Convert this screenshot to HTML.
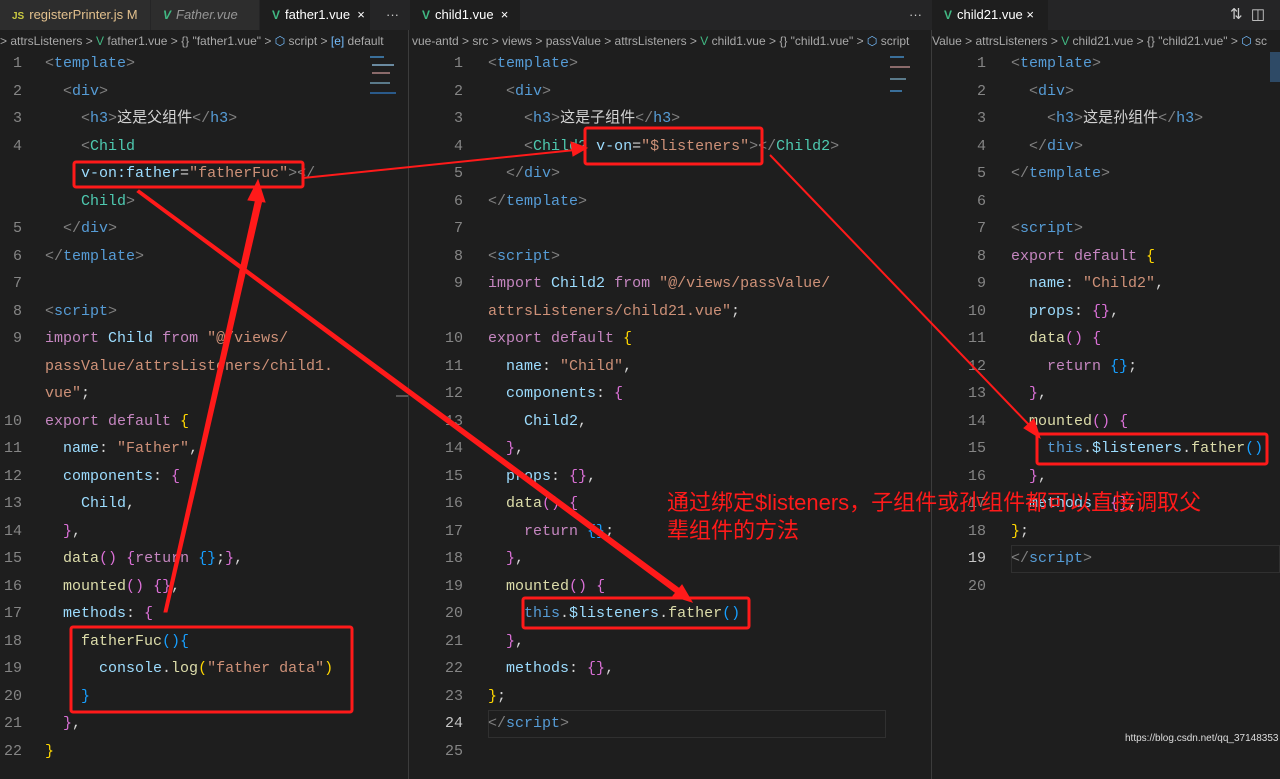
<!DOCTYPE html>
<html><head><meta charset="utf-8">
<style>
*{margin:0;padding:0;box-sizing:border-box}
body{width:1280px;height:749px;background:#1e1e1e;overflow:hidden;position:relative;font-family:"Liberation Mono","Noto Sans CJK SC",monospace;}
.bar{position:absolute;top:0;height:30px;background:#252526}
.tab{position:absolute;top:0;height:30px;line-height:30px;font-family:"Liberation Sans",sans-serif;font-size:13px;color:#cccccc;padding-left:12px;white-space:nowrap}
.tab.in{background:#2d2d2d;color:#969696}
.tab.act{background:#1e1e1e;color:#ffffff}
.vi{color:#41b883;font-weight:bold;font-size:12px;margin-right:5px}
.bc{position:absolute;top:31px;height:20px;line-height:20px;font-family:"Liberation Sans",sans-serif;font-size:12px;color:#a9a9a9;white-space:nowrap;overflow:hidden}
.sep{position:absolute;top:0;width:1px;height:749px;background:#3c3c3c}
.l{position:absolute;height:27.5px;line-height:27.5px;font-size:15px;white-space:pre;color:#d4d4d4}
.n{position:absolute;height:27.5px;line-height:27.5px;font-size:15px;color:#858585;text-align:right;width:30px}
.g{color:#808080}.t{color:#569cd6}.c{color:#4ec9b0}.a{color:#9cdcfe}.s{color:#ce9178}.k{color:#c586c0}.f{color:#dcdcaa}.y{color:#ffd700}.p{color:#da70d6}.b{color:#179fff}.w{color:#d4d4d4}
.mm{position:absolute;height:2px}
</style></head><body>
<div class="bar" style="left:0;width:1280px"></div>
<div class="tab in" style="left:0;width:150px;color:#e2c08d"><span style="color:#cbcb41;font-size:10px;font-weight:bold;margin-right:5px">JS</span>registerPrinter.js M</div>
<div class="tab in" style="left:151px;width:108px;font-style:italic"><span class="vi">V</span>Father.vue</div>
<div class="tab act" style="left:260px;width:110px"><span class="vi">V</span>father1.vue &nbsp;×</div>
<div class="tab" style="left:374px;color:#ccc">···</div>
<div class="tab act" style="left:410px;width:110px"><span class="vi">V</span>child1.vue &nbsp;×</div>
<div class="tab" style="left:897px;color:#ccc">···</div>
<div class="tab act" style="left:932px;width:116px"><span class="vi">V</span>child21.vue ×</div>
<div class="tab" style="left:1218px;color:#ccc;font-size:15px">⇅ &nbsp;◫</div>
<div class="bc" style="left:0;width:407px">&gt; attrsListeners &gt; <span style="color:#41b883">V</span> father1.vue &gt; {} "father1.vue" &gt; <span style="color:#75beff">⬡</span> script &gt; <span style="color:#75beff">[e]</span> default</div>
<div class="bc" style="left:412px;width:518px">vue-antd &gt; src &gt; views &gt; passValue &gt; attrsListeners &gt; <span style="color:#41b883">V</span> child1.vue &gt; {} "child1.vue" &gt; <span style="color:#75beff">⬡</span> script</div>
<div class="bc" style="left:932px;width:348px">Value &gt; attrsListeners &gt; <span style="color:#41b883">V</span> child21.vue &gt; {} "child21.vue" &gt; <span style="color:#75beff">⬡</span> sc</div>
<div class="sep" style="left:408px;top:30px"></div>
<div class="sep" style="left:931px;top:30px"></div>
<div style="position:absolute;left:396px;top:395px;width:12px;height:2px;background:#555"></div>
<div style="position:absolute;left:488px;top:710px;width:398px;height:28px;border:1px solid #303030"></div>
<div style="position:absolute;left:1011px;top:545px;width:269px;height:28px;border:1px solid #303030"></div>
<div class="mm" style="left:370px;top:56px;width:14px;background:#3a6f9a"></div><div class="mm" style="left:372px;top:64px;width:22px;background:#6a8aa0"></div><div class="mm" style="left:372px;top:72px;width:18px;background:#8a6a6a"></div><div class="mm" style="left:370px;top:82px;width:20px;background:#5a7a8a"></div><div class="mm" style="left:370px;top:92px;width:26px;background:#2a5a8a"></div>
<div class="mm" style="left:890px;top:56px;width:14px;background:#3a6f9a"></div><div class="mm" style="left:890px;top:66px;width:20px;background:#8a6a6a"></div><div class="mm" style="left:890px;top:78px;width:16px;background:#5a7a8a"></div><div class="mm" style="left:890px;top:90px;width:12px;background:#3a6f9a"></div>
<div class="mm" style="left:1270px;top:52px;width:10px;height:30px;background:#2e4a66"></div>

<div class="n" style="left:-8px;top:50px">1</div><div class="l" style="left:45px;top:50px"><span class="g">&lt;</span><span class="t">template</span><span class="g">&gt;</span></div>
<div class="n" style="left:-8px;top:77.5px">2</div><div class="l" style="left:45px;top:77.5px">  <span class="g">&lt;</span><span class="t">div</span><span class="g">&gt;</span></div>
<div class="n" style="left:-8px;top:105px">3</div><div class="l" style="left:45px;top:105px">    <span class="g">&lt;</span><span class="t">h3</span><span class="g">&gt;</span>这是父组件<span class="g">&lt;/</span><span class="t">h3</span><span class="g">&gt;</span></div>
<div class="n" style="left:-8px;top:132.5px">4</div><div class="l" style="left:45px;top:132.5px">    <span class="g">&lt;</span><span class="c">Child</span></div>
<div class="l" style="left:45px;top:160px">    <span class="a">v-on:father</span>=<span class="s">"fatherFuc"</span><span class="g">&gt;&lt;/</span></div>
<div class="l" style="left:45px;top:187.5px">    <span class="c">Child</span><span class="g">&gt;</span></div>
<div class="n" style="left:-8px;top:215px">5</div><div class="l" style="left:45px;top:215px">  <span class="g">&lt;/</span><span class="t">div</span><span class="g">&gt;</span></div>
<div class="n" style="left:-8px;top:242.5px">6</div><div class="l" style="left:45px;top:242.5px"><span class="g">&lt;/</span><span class="t">template</span><span class="g">&gt;</span></div>
<div class="n" style="left:-8px;top:270px">7</div>
<div class="n" style="left:-8px;top:297.5px">8</div><div class="l" style="left:45px;top:297.5px"><span class="g">&lt;</span><span class="t">script</span><span class="g">&gt;</span></div>
<div class="n" style="left:-8px;top:325px">9</div><div class="l" style="left:45px;top:325px"><span class="k">import</span> <span class="a">Child</span> <span class="k">from</span> <span class="s">"@/views/</span></div>
<div class="l" style="left:45px;top:352.5px"><span class="s">passValue/attrsListeners/child1.</span></div>
<div class="l" style="left:45px;top:380px"><span class="s">vue"</span>;</div>
<div class="n" style="left:-8px;top:407.5px">10</div><div class="l" style="left:45px;top:407.5px"><span class="k">export default</span> <span class="y">{</span></div>
<div class="n" style="left:-8px;top:435px">11</div><div class="l" style="left:45px;top:435px">  <span class="a">name</span>: <span class="s">"Father"</span>,</div>
<div class="n" style="left:-8px;top:462.5px">12</div><div class="l" style="left:45px;top:462.5px">  <span class="a">components</span>: <span class="p">{</span></div>
<div class="n" style="left:-8px;top:490px">13</div><div class="l" style="left:45px;top:490px">    <span class="a">Child</span>,</div>
<div class="n" style="left:-8px;top:517.5px">14</div><div class="l" style="left:45px;top:517.5px">  <span class="p">}</span>,</div>
<div class="n" style="left:-8px;top:545px">15</div><div class="l" style="left:45px;top:545px">  <span class="f">data</span><span class="p">()</span> <span class="p">{</span><span class="k">return</span> <span class="b">{}</span>;<span class="p">}</span>,</div>
<div class="n" style="left:-8px;top:572.5px">16</div><div class="l" style="left:45px;top:572.5px">  <span class="f">mounted</span><span class="p">()</span> <span class="p">{}</span>,</div>
<div class="n" style="left:-8px;top:600px">17</div><div class="l" style="left:45px;top:600px">  <span class="a">methods</span>: <span class="p">{</span></div>
<div class="n" style="left:-8px;top:627.5px">18</div><div class="l" style="left:45px;top:627.5px">    <span class="f">fatherFuc</span><span class="b">(){</span></div>
<div class="n" style="left:-8px;top:655px">19</div><div class="l" style="left:45px;top:655px">      <span class="a">console</span>.<span class="f">log</span><span class="y">(</span><span class="s">"father data"</span><span class="y">)</span></div>
<div class="n" style="left:-8px;top:682.5px">20</div><div class="l" style="left:45px;top:682.5px">    <span class="b">}</span></div>
<div class="n" style="left:-8px;top:710px">21</div><div class="l" style="left:45px;top:710px">  <span class="p">}</span>,</div>
<div class="n" style="left:-8px;top:737.5px">22</div><div class="l" style="left:45px;top:737.5px"><span class="y">}</span></div>

<div class="n" style="left:433px;top:50px">1</div><div class="l" style="left:488px;top:50px"><span class="g">&lt;</span><span class="t">template</span><span class="g">&gt;</span></div>
<div class="n" style="left:433px;top:77.5px">2</div><div class="l" style="left:488px;top:77.5px">  <span class="g">&lt;</span><span class="t">div</span><span class="g">&gt;</span></div>
<div class="n" style="left:433px;top:105px">3</div><div class="l" style="left:488px;top:105px">    <span class="g">&lt;</span><span class="t">h3</span><span class="g">&gt;</span>这是子组件<span class="g">&lt;/</span><span class="t">h3</span><span class="g">&gt;</span></div>
<div class="n" style="left:433px;top:132.5px">4</div><div class="l" style="left:488px;top:132.5px">    <span class="g">&lt;</span><span class="c">Child2</span> <span class="a">v-on</span>=<span class="s">"$listeners"</span><span class="g">&gt;&lt;/</span><span class="c">Child2</span><span class="g">&gt;</span></div>
<div class="n" style="left:433px;top:160px">5</div><div class="l" style="left:488px;top:160px">  <span class="g">&lt;/</span><span class="t">div</span><span class="g">&gt;</span></div>
<div class="n" style="left:433px;top:187.5px">6</div><div class="l" style="left:488px;top:187.5px"><span class="g">&lt;/</span><span class="t">template</span><span class="g">&gt;</span></div>
<div class="n" style="left:433px;top:215px">7</div>
<div class="n" style="left:433px;top:242.5px">8</div><div class="l" style="left:488px;top:242.5px"><span class="g">&lt;</span><span class="t">script</span><span class="g">&gt;</span></div>
<div class="n" style="left:433px;top:270px">9</div><div class="l" style="left:488px;top:270px"><span class="k">import</span> <span class="a">Child2</span> <span class="k">from</span> <span class="s">"@/views/passValue/</span></div>
<div class="l" style="left:488px;top:297.5px"><span class="s">attrsListeners/child21.vue"</span>;</div>
<div class="n" style="left:433px;top:325px">10</div><div class="l" style="left:488px;top:325px"><span class="k">export default</span> <span class="y">{</span></div>
<div class="n" style="left:433px;top:352.5px">11</div><div class="l" style="left:488px;top:352.5px">  <span class="a">name</span>: <span class="s">"Child"</span>,</div>
<div class="n" style="left:433px;top:380px">12</div><div class="l" style="left:488px;top:380px">  <span class="a">components</span>: <span class="p">{</span></div>
<div class="n" style="left:433px;top:407.5px">13</div><div class="l" style="left:488px;top:407.5px">    <span class="a">Child2</span>,</div>
<div class="n" style="left:433px;top:435px">14</div><div class="l" style="left:488px;top:435px">  <span class="p">}</span>,</div>
<div class="n" style="left:433px;top:462.5px">15</div><div class="l" style="left:488px;top:462.5px">  <span class="a">props</span>: <span class="p">{}</span>,</div>
<div class="n" style="left:433px;top:490px">16</div><div class="l" style="left:488px;top:490px">  <span class="f">data</span><span class="p">()</span> <span class="p">{</span></div>
<div class="n" style="left:433px;top:517.5px">17</div><div class="l" style="left:488px;top:517.5px">    <span class="k">return</span> <span class="b">{}</span>;</div>
<div class="n" style="left:433px;top:545px">18</div><div class="l" style="left:488px;top:545px">  <span class="p">}</span>,</div>
<div class="n" style="left:433px;top:572.5px">19</div><div class="l" style="left:488px;top:572.5px">  <span class="f">mounted</span><span class="p">()</span> <span class="p">{</span></div>
<div class="n" style="left:433px;top:600px">20</div><div class="l" style="left:488px;top:600px">    <span class="t">this</span>.<span class="a">$listeners</span>.<span class="f">father</span><span class="b">()</span></div>
<div class="n" style="left:433px;top:627.5px">21</div><div class="l" style="left:488px;top:627.5px">  <span class="p">}</span>,</div>
<div class="n" style="left:433px;top:655px">22</div><div class="l" style="left:488px;top:655px">  <span class="a">methods</span>: <span class="p">{}</span>,</div>
<div class="n" style="left:433px;top:682.5px">23</div><div class="l" style="left:488px;top:682.5px"><span class="y">}</span>;</div>
<div class="n" style="left:433px;top:710px;color:#c6c6c6">24</div><div class="l" style="left:488px;top:710px"><span class="g">&lt;/</span><span class="t">script</span><span class="g">&gt;</span></div>
<div class="n" style="left:433px;top:737.5px">25</div>

<div class="n" style="left:956px;top:50px">1</div><div class="l" style="left:1011px;top:50px"><span class="g">&lt;</span><span class="t">template</span><span class="g">&gt;</span></div>
<div class="n" style="left:956px;top:77.5px">2</div><div class="l" style="left:1011px;top:77.5px">  <span class="g">&lt;</span><span class="t">div</span><span class="g">&gt;</span></div>
<div class="n" style="left:956px;top:105px">3</div><div class="l" style="left:1011px;top:105px">    <span class="g">&lt;</span><span class="t">h3</span><span class="g">&gt;</span>这是孙组件<span class="g">&lt;/</span><span class="t">h3</span><span class="g">&gt;</span></div>
<div class="n" style="left:956px;top:132.5px">4</div><div class="l" style="left:1011px;top:132.5px">  <span class="g">&lt;/</span><span class="t">div</span><span class="g">&gt;</span></div>
<div class="n" style="left:956px;top:160px">5</div><div class="l" style="left:1011px;top:160px"><span class="g">&lt;/</span><span class="t">template</span><span class="g">&gt;</span></div>
<div class="n" style="left:956px;top:187.5px">6</div>
<div class="n" style="left:956px;top:215px">7</div><div class="l" style="left:1011px;top:215px"><span class="g">&lt;</span><span class="t">script</span><span class="g">&gt;</span></div>
<div class="n" style="left:956px;top:242.5px">8</div><div class="l" style="left:1011px;top:242.5px"><span class="k">export default</span> <span class="y">{</span></div>
<div class="n" style="left:956px;top:270px">9</div><div class="l" style="left:1011px;top:270px">  <span class="a">name</span>: <span class="s">"Child2"</span>,</div>
<div class="n" style="left:956px;top:297.5px">10</div><div class="l" style="left:1011px;top:297.5px">  <span class="a">props</span>: <span class="p">{}</span>,</div>
<div class="n" style="left:956px;top:325px">11</div><div class="l" style="left:1011px;top:325px">  <span class="f">data</span><span class="p">()</span> <span class="p">{</span></div>
<div class="n" style="left:956px;top:352.5px">12</div><div class="l" style="left:1011px;top:352.5px">    <span class="k">return</span> <span class="b">{}</span>;</div>
<div class="n" style="left:956px;top:380px">13</div><div class="l" style="left:1011px;top:380px">  <span class="p">}</span>,</div>
<div class="n" style="left:956px;top:407.5px">14</div><div class="l" style="left:1011px;top:407.5px">  <span class="f">mounted</span><span class="p">()</span> <span class="p">{</span></div>
<div class="n" style="left:956px;top:435px">15</div><div class="l" style="left:1011px;top:435px">    <span class="t">this</span>.<span class="a">$listeners</span>.<span class="f">father</span><span class="b">()</span></div>
<div class="n" style="left:956px;top:462.5px">16</div><div class="l" style="left:1011px;top:462.5px">  <span class="p">}</span>,</div>
<div class="n" style="left:956px;top:490px">17</div><div class="l" style="left:1011px;top:490px">  <span class="a">methods</span>: <span class="p">{}</span>,</div>
<div class="n" style="left:956px;top:517.5px">18</div><div class="l" style="left:1011px;top:517.5px"><span class="y">}</span>;</div>
<div class="n" style="left:956px;top:545px;color:#c6c6c6">19</div><div class="l" style="left:1011px;top:545px"><span class="g">&lt;/</span><span class="t">script</span><span class="g">&gt;</span></div>
<div class="n" style="left:956px;top:572.5px">20</div>

<svg width="1280" height="749" style="position:absolute;left:0;top:0">
<g fill="none" stroke="#ff1a1a" stroke-width="3">
<rect x="74" y="162" width="229" height="25" rx="2"/>
<rect x="585" y="128" width="177" height="36" rx="2"/>
<rect x="523" y="598" width="226" height="30" rx="2"/>
<rect x="1037" y="434" width="230" height="30" rx="2"/>
<rect x="71" y="627" width="281" height="85" rx="2"/>
</g>
<g fill="#ff1a1a" stroke="#ff1a1a">
<polygon points="164,612 167,612 262,200 256,198" stroke-width="1"/>
<polygon points="248,200 258,180 265,202"/>
<line x1="303" y1="178" x2="575" y2="150" stroke-width="2"/>
<polygon points="587,148 571,142 573,156"/>
<polygon points="137,192 139,190 684,592 680,596" stroke-width="1"/>
<polygon points="692,602 673,596 682,585"/>
<line x1="770" y1="155" x2="1032" y2="428" stroke-width="2"/>
<polygon points="1040,438 1024,428 1034,419"/>
</g>
<text x="667" y="510" fill="#ff1a1a" font-size="22" font-family="Liberation Sans, Noto Sans CJK SC, sans-serif">通过绑定$listeners，子组件或孙组件都可以直接调取父</text>
<text x="667" y="538" fill="#ff1a1a" font-size="22" font-family="Liberation Sans, Noto Sans CJK SC, sans-serif">辈组件的方法</text>
<text x="1125" y="741" fill="#dddddd" font-size="10" font-family="Liberation Sans, sans-serif">https://blog.csdn.net/qq_37148353</text>
</svg>
</body></html>
